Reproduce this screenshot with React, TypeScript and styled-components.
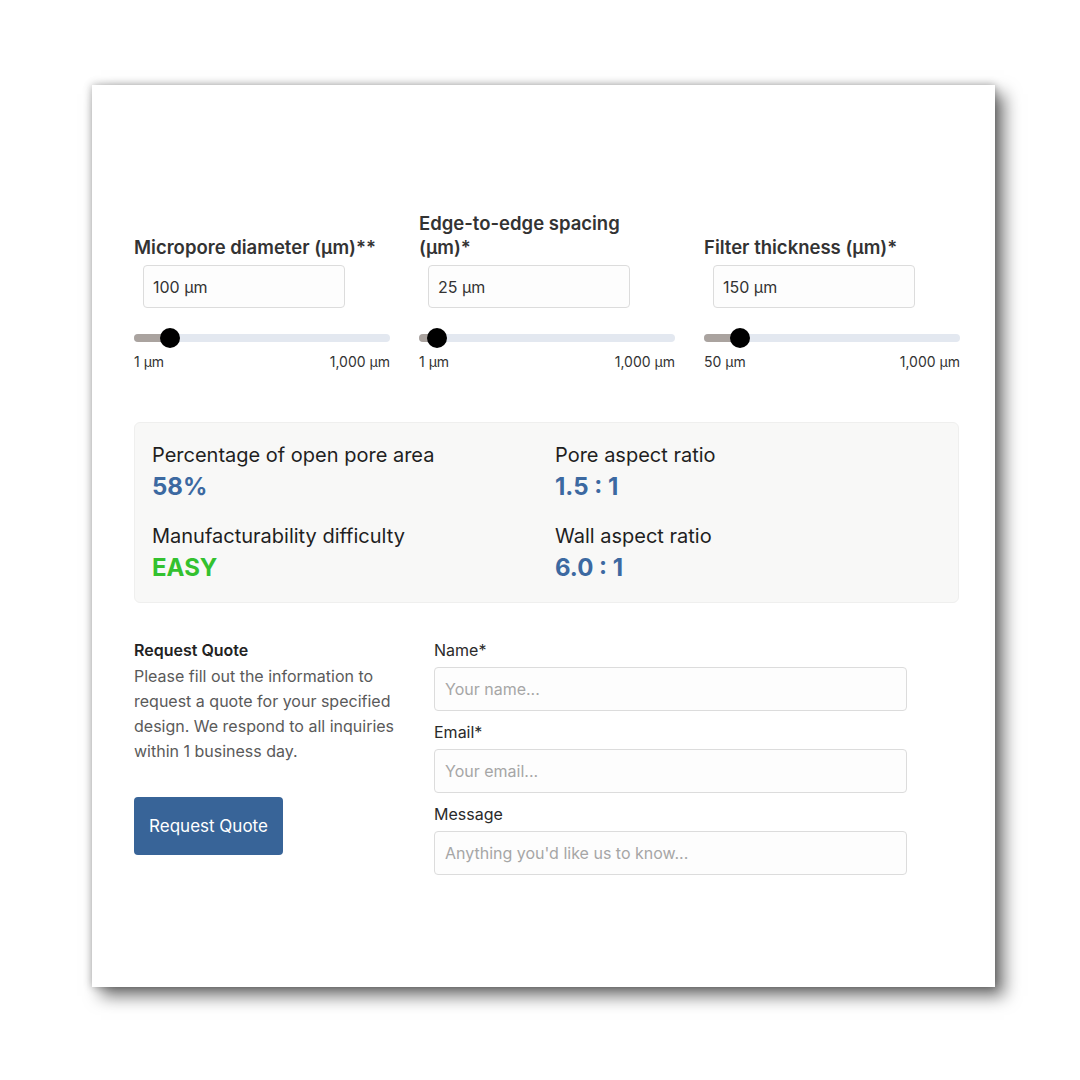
import styled, { createGlobalStyle } from "styled-components";

const Global = createGlobalStyle`
  html, body {
    margin: 0;
    background: #ffffff;
    font-family: Inter, "Open Sans", "Liberation Sans", sans-serif;
    color: #222;
  }
  * { box-sizing: border-box; }
`;

const Page = styled.div`
  min-height: 1080px;
  padding: 85px 0 0 92px;
`;

const Card = styled.div`
  width: 903px;
  height: 902px;
  background: #fff;
  box-shadow: 0 0 8px rgba(0, 0, 0, 0.3), 9px 9px 16px rgba(0, 0, 0, 0.55);
  padding: 126px 36px 0 42px;
`;

const Sliders = styled.div`
  display: grid;
  grid-template-columns: repeat(3, 256px);
  column-gap: 29px;
  align-items: end;
`;

const Field = styled.div`
  display: flex;
  flex-direction: column;
`;

const FieldLabel = styled.div`
  font-size: 18.5px;
  font-weight: 600;
  line-height: 24px;
  color: #333;
  padding-right: 10px;
`;

const NumberBox = styled.div`
  margin: 6px 0 0 9px;
  width: 202px;
  height: 43px;
  border: 1px solid #dcdcdc;
  border-radius: 4px;
  background: #fdfdfd;
  padding-left: 9px;
  display: flex;
  align-items: center;
  font-size: 16px;
  color: #333;
`;

const Track = styled.div`
  position: relative;
  margin-top: 26px;
  height: 8px;
  border-radius: 4px;
  background: #e3e8f0;
`;

const Fill = styled.div`
  height: 100%;
  border-radius: 4px;
  background: #aaa39f;
`;

const Thumb = styled.div`
  position: absolute;
  top: 50%;
  width: 20px;
  height: 20px;
  margin: -10px 0 0 -10px;
  border-radius: 50%;
  background: #000;
`;

const Range = styled.div`
  display: flex;
  justify-content: space-between;
  margin-top: 10px;
  font-size: 14px;
  line-height: 20px;
  color: #333;
`;

const Results = styled.div`
  margin-top: 50px;
  height: 181px;
  background: #f8f8f7;
  border: 1px solid #efefee;
  border-radius: 6px;
  padding: 19px 17px 0;
  display: grid;
  grid-template-columns: 403px 1fr;
  row-gap: 20px;
  align-content: start;
`;

const Stat = styled.div`
  display: flex;
  flex-direction: column;
`;

const StatLabel = styled.div`
  font-size: 20px;
  line-height: 26px;
  color: #1f1f1f;
`;

const StatValue = styled.div<{ $green?: boolean }>`
  font-size: 24px;
  font-weight: 700;
  line-height: 32px;
  margin-top: 3px;
  color: ${({ $green }) => ($green ? "#33c12f" : "#3c69a1")};
`;

const Quote = styled.div`
  margin-top: 36px;
  display: grid;
  grid-template-columns: 300px 473px;
`;

const Intro = styled.div`
  display: flex;
  flex-direction: column;
  align-items: flex-start;
  padding-right: 26px;
`;

const IntroTitle = styled.div`
  font-size: 16px;
  font-weight: 600;
  line-height: 22px;
  color: #222;
`;

const IntroText = styled.p`
  margin: 3px 0 0;
  font-size: 16px;
  line-height: 25px;
  color: #5a5a5a;
`;

const Button = styled.button`
  margin-top: 33px;
  width: 149px;
  height: 58px;
  border: none;
  border-radius: 4px;
  background: #386498;
  color: #fff;
  font-family: inherit;
  font-size: 17px;
`;

const Form = styled.div`
  display: flex;
  flex-direction: column;
`;

const FormLabel = styled.label`
  font-size: 16px;
  line-height: 22px;
  color: #2a2a2a;
  margin-bottom: 6px;
`;

const TextInput = styled.input`
  height: 44px;
  width: 100%;
  border: 1px solid #dcdcdc;
  border-radius: 4px;
  background: #fdfdfd;
  padding: 0 10px;
  font-family: inherit;
  font-size: 16px;
  margin-bottom: 10px;
  &::placeholder { color: #a6a6a6; }
`;

const sliders = [
  { label: "Micropore diameter (µm)**", value: "100 µm", pct: 14, min: "1 µm", max: "1,000 µm" },
  { label: "Edge-to-edge spacing (µm)*", value: "25 µm", pct: 7, min: "1 µm", max: "1,000 µm" },
  { label: "Filter thickness (µm)*", value: "150 µm", pct: 14, min: "50 µm", max: "1,000 µm" },
];

const stats = [
  { label: "Percentage of open pore area", value: "58%" },
  { label: "Pore aspect ratio", value: "1.5 : 1" },
  { label: "Manufacturability difficulty", value: "EASY", green: true },
  { label: "Wall aspect ratio", value: "6.0 : 1" },
];

export default function App() {
  return (
    <Page>
      <Global />
      <Card>
        <Sliders>
          {sliders.map((s) => (
            <Field key={s.label}>
              <FieldLabel>{s.label}</FieldLabel>
              <NumberBox>{s.value}</NumberBox>
              <Track>
                <Fill style={{ width: `${s.pct}%` }} />
                <Thumb style={{ left: `${s.pct}%` }} />
              </Track>
              <Range>
                <span>{s.min}</span>
                <span>{s.max}</span>
              </Range>
            </Field>
          ))}
        </Sliders>
        <Results>
          {stats.map((s) => (
            <Stat key={s.label}>
              <StatLabel>{s.label}</StatLabel>
              <StatValue $green={s.green}>{s.value}</StatValue>
            </Stat>
          ))}
        </Results>
        <Quote>
          <Intro>
            <IntroTitle>Request Quote</IntroTitle>
            <IntroText>
              Please fill out the information to request a quote for your specified design. We
              respond to all inquiries within 1 business day.
            </IntroText>
            <Button>Request Quote</Button>
          </Intro>
          <Form>
            <FormLabel>Name*</FormLabel>
            <TextInput placeholder="Your name..." />
            <FormLabel>Email*</FormLabel>
            <TextInput placeholder="Your email..." />
            <FormLabel>Message</FormLabel>
            <TextInput placeholder="Anything you'd like us to know..." />
          </Form>
        </Quote>
      </Card>
    </Page>
  );
}
